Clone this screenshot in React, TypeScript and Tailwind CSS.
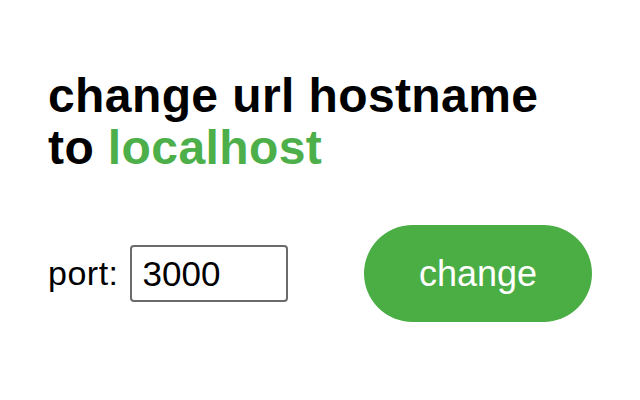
export default function App() {
    return (
        <div
            className="min-h-[400px] w-[640px] bg-white px-12 pt-[70px] text-black"
            style={{ fontFamily: '"Liberation Sans", Arial, sans-serif' }}
        >
            <h1 className="text-[48px] font-bold leading-[52px] tracking-[0.4px]">
                change url hostname
                <br />
                to <span className="text-[#4caf4a]">localhost</span>
            </h1>

            <div className="mt-[51px] flex h-[97px] items-center justify-between">
                <label className="flex items-center text-[34px]">
                    <span className="mr-[11px] tracking-[0.5px]">port:</span>
                    <input
                        type="text"
                        defaultValue="3000"
                        className="h-[57px] w-[158px] rounded-[4px] border-2 border-[#6b6b6b] px-[11px] text-[35px] outline-none"
                    />
                </label>
                <button className="h-[97px] w-[228px] rounded-full bg-[#4bae44] text-[36px] text-white">
                    change
                </button>
            </div>
        </div>
    );
}
